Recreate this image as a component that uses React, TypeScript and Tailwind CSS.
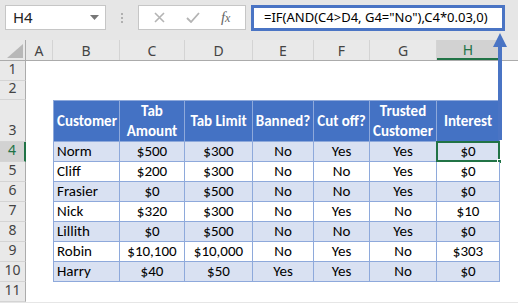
import React from "react";

const calibri = "font-['Carlito','Calibri','Lato',sans-serif]";
const segoe = "font-['Segoe_UI','Noto_Sans','Open_Sans',sans-serif]";

type Row = [string, string, string, string, string, string, string];

const rows: Row[] = [
  ["Norm", "$500", "$300", "No", "Yes", "Yes", "$0"],
  ["Cliff", "$200", "$300", "No", "No", "Yes", "$0"],
  ["Frasier", "$0", "$500", "No", "No", "Yes", "$0"],
  ["Nick", "$320", "$300", "No", "Yes", "No", "$10"],
  ["Lillith", "$0", "$500", "No", "No", "Yes", "$0"],
  ["Robin", "$10,100", "$10,000", "No", "Yes", "No", "$303"],
  ["Harry", "$40", "$50", "Yes", "Yes", "No", "$0"],
];

const widths = ["w-[67px]", "w-[65px]", "w-[68px]", "w-[61px]", "w-[56px]", "w-[67px]", "w-[63px]"];

const cols = [
  { l: "A", w: "w-[27px]" },
  { l: "B", w: "w-[67px]" },
  { l: "C", w: "w-[65px]" },
  { l: "D", w: "w-[68px]" },
  { l: "E", w: "w-[61px]" },
  { l: "F", w: "w-[56px]" },
  { l: "G", w: "w-[67px]" },
  { l: "H", w: "w-[63px]", sel: true },
];

const RowHead = ({ n, h, sel }: { n: number; h: string; sel?: boolean }) => (
  <div
    className={`w-[26px] shrink-0 ${h} flex items-end justify-center pb-[1px] border-b border-b-[#d4d4d4] text-[14px] ${segoe} ${
      sel
        ? "bg-[#d2d2d2] border-r-2 border-r-[#217346] text-[#217346]"
        : "bg-[#e9e9e9] border-r border-r-[#ababab] text-[#444]"
    }`}
  >
    {n}
  </div>
);

const Toolbar = () => (
  <div className="h-[40px] flex items-start pt-[5px] pl-[5px] gap-0">
    <div className="w-[101px] h-[25px] bg-white border border-[#c6c6c6] flex items-center justify-between pl-[7px] pr-[6px]">
      <span className={`text-[15px] text-[#222] ${segoe}`}>H4</span>
      <svg width="9" height="5" viewBox="0 0 9 5">
        <path d="M0 0h9L4.5 5z" fill="#777" />
      </svg>
    </div>
    <div className="w-[32px] h-[25px] flex flex-col items-center justify-center gap-[2px]">
      <span className="w-[2px] h-[2px] bg-[#b0b0b0]" />
      <span className="w-[2px] h-[2px] bg-[#b0b0b0]" />
      <span className="w-[2px] h-[2px] bg-[#b0b0b0]" />
    </div>
    <div className="w-[108px] h-[25px] bg-white border border-[#c6c6c6] flex items-center justify-around px-[4px]">
      <svg width="11" height="11" viewBox="0 0 11 11">
        <path d="M1 1l9 9M10 1l-9 9" stroke="#b4b4b4" strokeWidth="1.6" />
      </svg>
      <svg width="14" height="11" viewBox="0 0 14 11">
        <path d="M1 6l4 4 8-9" stroke="#b4b4b4" strokeWidth="1.8" fill="none" />
      </svg>
      <span className="font-['Liberation_Serif',serif] italic text-[15px] text-[#666] leading-none">
        f<span className="text-[12px]">x</span>
      </span>
    </div>
    <div className="ml-[5px] w-[254px] h-[26px] bg-white border-[3px] border-[#4a74c4] flex items-center pl-[10px] overflow-hidden">
      <span className={`text-[13px] text-black whitespace-nowrap ${segoe}`}>
        =IF(AND(C4&gt;D4, G4="No"),C4*0.03,0)
      </span>
    </div>
  </div>
);

export default function App() {
  return (
    <div className="w-[518px] h-[303px] bg-[#e6e6e6] relative overflow-hidden">
      <Toolbar />
      {/* column headers */}
      <div className={`flex h-[21px] border-b border-b-[#ababab] text-[14px] ${segoe}`}>
        <div className="w-[26px] shrink-0 bg-[#e9e9e9] border-r border-r-[#ababab] flex items-end justify-end p-[2px]">
          <svg width="16" height="14" viewBox="0 0 16 14">
            <path d="M16 0v14H0z" fill="#b8b8b8" />
          </svg>
        </div>
        {cols.map((c) => (
          <div
            key={c.l}
            className={`${c.w} shrink-0 flex items-center justify-center border-r border-r-[#d4d4d4] ${
              c.sel ? "bg-[#d2d2d2] text-[#217346] border-b-2 border-b-[#217346]" : "bg-[#e9e9e9] text-[#444]"
            }`}
          >
            {c.l}
          </div>
        ))}
        <div className="flex-1 bg-[#e9e9e9]" />
      </div>

      <div className="bg-white">
        <div className="flex">
          <RowHead n={1} h="h-[20px]" />
        </div>
        <div className="flex">
          <RowHead n={2} h="h-[19px]" />
        </div>
        {/* header row 3 */}
        <div className="flex">
          <RowHead n={3} h="h-[42px]" />
          <div className="w-[27px] shrink-0" />
          <div className={`flex h-[42px] border-y border-[#8ea9db] ${calibri} text-[15px] font-bold text-white leading-[20px]`}>
            {["Customer", "Tab\nAmount", "Tab Limit", "Banned?", "Cut off?", "Trusted\nCustomer", "Interest"].map(
              (t, i) => (
                <div
                  key={t}
                  className={`${widths[i]} shrink-0 bg-[#4472c4] border-r border-r-[#8ea9db] ${
                    i === 0 ? "border-l border-l-[#8ea9db] pl-[3px] justify-start" : "justify-center"
                  } flex items-center text-center whitespace-pre-line`}
                >
                  {t}
                </div>
              )
            )}
          </div>
        </div>
        {rows.map((r, ri) => (
          <div className="flex" key={r[0]}>
            <RowHead n={ri + 4} h="h-[20px]" sel={ri === 0} />
            <div className="w-[27px] shrink-0" />
            <div className={`flex h-[20px] border-b border-[#8ea9db] ${calibri} text-[15px] text-black`}>
              {r.map((v, ci) => (
                <div
                  key={ci}
                  className={`${widths[ci]} shrink-0 relative flex items-center border-r border-r-[#8ea9db] ${
                    ri % 2 === 0 ? "bg-[#d9e1f2]" : "bg-white"
                  } ${ci === 0 ? "border-l border-l-[#8ea9db] pl-[3px]" : "justify-center"}`}
                >
                  {v}
                  {ri === 0 && ci === 6 && (
                    <>
                      <div className="absolute -left-[1px] -top-[1px] -right-[1px] -bottom-[1px] border-2 border-[#217346]" />
                      <div className="absolute -right-[3px] -bottom-[3px] w-[5px] h-[5px] bg-[#217346] border border-white" />
                    </>
                  )}
                </div>
              ))}
            </div>
          </div>
        ))}
        <div className="flex">
          <RowHead n={11} h="h-[20px]" />
        </div>
      </div>

      {/* annotation arrow */}
      <svg className="absolute left-[490px] top-[31px]" width="20" height="112" viewBox="0 0 20 112">
        <path d="M10 2L17 16H12V109H8V16H3z" fill="#4a74c4" />
      </svg>
    </div>
  );
}
